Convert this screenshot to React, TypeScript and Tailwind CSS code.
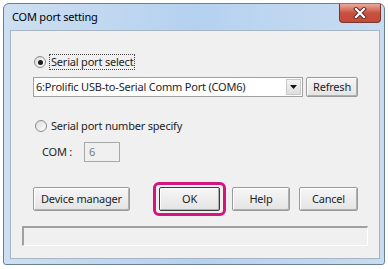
import React from "react";

const font = { fontFamily: '"Noto Sans", "Open Sans", sans-serif' };

function Btn({ label, w, h = "h-[24px]", def }: { label: string; w: string; h?: string; def?: boolean }) {
  return (
    <div
      className={`${w} ${h} flex items-center justify-center rounded-[2px] border ${
        def ? "border-[#3c3c3c]" : "border-[#9a9a9a]"
      } bg-gradient-to-b from-[#f6f6f6] to-[#e4e4e4] shadow-[inset_1px_1px_0_#ffffff,inset_-1px_-1px_0_#b0b0b0] text-[#1e1e1e]`}
    >
      {label}
    </div>
  );
}

function Radio({ checked }: { checked?: boolean }) {
  return (
    <div className="w-[12px] h-[12px] rounded-full border border-[#8a8a8a] bg-gradient-to-br from-[#dcdcdc] to-[#ffffff] flex items-center justify-center shrink-0">
      {checked && <div className="w-[5px] h-[5px] rounded-full bg-[#1a1a1a]" />}
    </div>
  );
}

export default function App() {
  return (
    <div className="w-[388px] h-[269px] bg-white pt-[3px] pl-[3px]" style={font}>
      <div className="w-[382px] h-[262px] rounded-t-[6px] rounded-b-[3px] border border-[#6d7f93] bg-gradient-to-r from-[#cddff1] via-[#b5d1f0] to-[#c8dcf1] flex flex-col">
        <div className="h-[26px] flex justify-between pl-[8px] pr-[3px]">
          <div className="text-[11px] tracking-[-0.2px] text-black pt-[6px] leading-[14px]">COM port setting</div>
          <div className="w-[42px] h-[19px] rounded-b-[4px] border border-t-0 border-[#7a3530] bg-gradient-to-b from-[#e9a99c] via-[#c9503f] to-[#c24a3a] flex items-center justify-center">
            <svg width="14" height="12" viewBox="0 0 14 12">
              <path d="M3 2 L11 10 M11 2 L3 10" stroke="#5a2a24" strokeWidth="4" strokeLinecap="square" />
              <path d="M3 2 L11 10 M11 2 L3 10" stroke="#ffffff" strokeWidth="2.2" strokeLinecap="square" />
            </svg>
          </div>
        </div>
        <div className="ml-[6px] mr-[4px] h-[229px] bg-[#f0f0f0] border border-[#a7b5c4] flex flex-col text-[11px] tracking-[-0.2px] leading-[14px] text-[#1e1e1e]">
          <div className="mt-[23px] ml-[23px] flex items-center gap-[3px] h-[16px]">
            <Radio checked />
            <div className="border border-dotted border-[#444] px-[1px] leading-[14px]">Serial port select</div>
          </div>
          <div className="mt-[7px] ml-[22px] flex gap-[3px] h-[20px]">
            <div className="w-[270px] h-[20px] border border-[#a0a0a0] bg-white flex items-center">
              <div className="flex-1 pl-[2px] whitespace-nowrap">6:Prolific USB-to-Serial Comm Port (COM6)</div>
              <div className="w-[15px] h-[16px] mr-[1px] border border-[#c8c8c8] bg-gradient-to-b from-[#f4f4f4] to-[#dedede] flex items-center justify-center">
                <svg width="7" height="4" viewBox="0 0 7 4"><path d="M0 0 H7 L3.5 4 Z" fill="#111" /></svg>
              </div>
            </div>
            <Btn label="Refresh" w="w-[52px]" h="h-[20px]" />
          </div>
          <div className="mt-[21px] ml-[24px] flex items-center gap-[4px] h-[16px]">
            <Radio />
            <div>Serial port number specify</div>
          </div>
          <div className="mt-[8px] ml-[31px] flex items-center h-[20px]">
            <div className="w-[42px]">COM :</div>
            <div className="w-[36px] h-[20px] border border-[#a8a8a8] bg-[#f0f0f0] pl-[4px] flex items-center text-[#7a7a7a]">6</div>
          </div>
          <div className="mt-[20px] ml-[22px] flex items-center h-[34px]">
            <Btn label="Device manager" w="w-[97px]" />
            <div className="ml-[23px] w-[73px] h-[34px] rounded-[6px] border-[3px] border-[#d4147f] flex items-center justify-center">
              <Btn label="OK" w="w-[61px]" def />
            </div>
            <div className="ml-[6px]"><Btn label="Help" w="w-[58px]" /></div>
            <div className="ml-[9px]"><Btn label="Cancel" w="w-[59px]" /></div>
          </div>
          <div className="mt-[10px] ml-[11px] w-[346px] h-[20px] border-t-2 border-l-2 border-[#a0a0a0] border-b border-r border-b-white border-r-white" />
        </div>
      </div>
    </div>
  );
}
